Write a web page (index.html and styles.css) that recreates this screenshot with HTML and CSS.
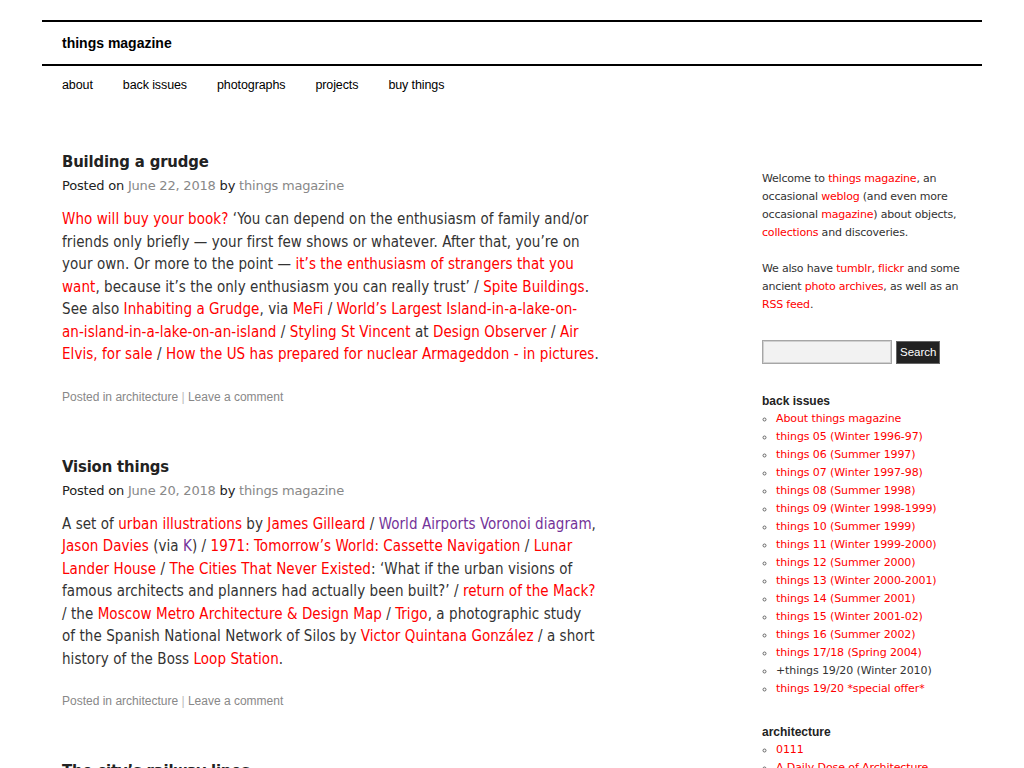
FILE: index.html
```html
<!DOCTYPE html>
<html lang="en">
<head>
<meta charset="utf-8">
<title>things magazine</title>
<link rel="stylesheet" href="styles.css">
</head>
<body>
<div class="wrapper">
  <header class="site-header">
    <h1 class="site-title"><a href="#">things magazine</a></h1>
  </header>
  <nav class="main-nav">
    <a href="#">about</a>
    <a href="#">back issues</a>
    <a href="#">photographs</a>
    <a href="#">projects</a>
    <a href="#">buy things</a>
  </nav>
  <div class="main">
    <div class="content">
      <article class="post">
        <h2 class="post-title">Building a grudge</h2>
        <div class="meta">Posted on <a href="#">June 22, 2018</a> by <a href="#">things magazine</a></div>
        <p class="entry"><a href="#">Who will buy your book?</a> ‘You can depend on the enthusiasm of family and/or friends only briefly — your first few shows or whatever. After that, you’re on your own. Or more to the point — <a href="#">it’s the enthusiasm of strangers that you want</a>, because it’s the only enthusiasm you can really trust’ / <a href="#">Spite Buildings</a>. See also <a href="#">Inhabiting a Grudge</a>, via <a href="#">MeFi</a> / <a href="#">World’s Largest Island-in-a-lake-on-an‑island‑in‑a‑lake‑on‑an‑island</a> / <a href="#">Styling St Vincent</a> at <a href="#">Design Observer</a> / <a href="#">Air Elvis, for sale</a> / <a href="#">How the US has prepared for nuclear Armageddon - in pictures</a>.</p>
        <div class="post-footer">Posted in <a href="#">architecture</a> <span class="sep">|</span> <a href="#">Leave a comment</a></div>
      </article>
      <article class="post">
        <h2 class="post-title">Vision things</h2>
        <div class="meta">Posted on <a href="#">June 20, 2018</a> by <a href="#">things magazine</a></div>
        <p class="entry">A set of <a href="#">urban illustrations</a> by <a href="#">James Gilleard</a> / <a class="visited" href="#">World Airports Voronoi diagram</a>, <a href="#">Jason Davies</a> (via <a class="visited" href="#">K</a>) / <a href="#">1971: Tomorrow’s World: Cassette Navigation</a> / <a href="#">Lunar Lander House</a> / <a href="#">The Cities That Never Existed</a>: ‘What if the urban visions of famous architects and planners had actually been built?’ / <a href="#">return of the Mack?</a> / the <a href="#">Moscow Metro Architecture &amp; Design Map</a> / <a href="#">Trigo</a>, a photographic study of&nbsp;the Spanish National Network of Silos by <a href="#">Victor Quintana González</a> / a short history of the Boss <a href="#">Loop Station</a>.</p>
        <div class="post-footer">Posted in <a href="#">architecture</a> <span class="sep">|</span> <a href="#">Leave a comment</a></div>
      </article>
      <article class="post">
        <h2 class="post-title">The city’s railway lines</h2>
      </article>
    </div>
    <aside class="sidebar">
      <p>Welcome to <a href="#">things magazine</a>, an occasional <a href="#">weblog</a> (and even more occasional <a href="#">magazine</a>) about objects, <a href="#">collections</a> and discoveries.</p>
      <p>We also have <a href="#">tumblr</a>, <a href="#">flickr</a> and some ancient <a href="#">photo archives</a>, as well as an <a href="#">RSS feed</a>.</p>
      <form class="search">
        <input type="text" class="search-input">
        <button type="button" class="search-btn">Search</button>
      </form>
      <h3 class="widget-title">back issues</h3>
      <ul class="widget-list">
        <li><a href="#">About things magazine</a></li>
        <li><a href="#">things 05 (Winter 1996-97)</a></li>
        <li><a href="#">things 06 (Summer 1997)</a></li>
        <li><a href="#">things 07 (Winter 1997-98)</a></li>
        <li><a href="#">things 08 (Summer 1998)</a></li>
        <li><a href="#">things 09 (Winter 1998-1999)</a></li>
        <li><a href="#">things 10 (Summer 1999)</a></li>
        <li><a href="#">things 11 (Winter 1999-2000)</a></li>
        <li><a href="#">things 12 (Summer 2000)</a></li>
        <li><a href="#">things 13 (Winter 2000-2001)</a></li>
        <li><a href="#">things 14 (Summer 2001)</a></li>
        <li><a href="#">things 15 (Winter 2001-02)</a></li>
        <li><a href="#">things 16 (Summer 2002)</a></li>
        <li><a href="#">things 17/18 (Spring 2004)</a></li>
        <li><a class="dark" href="#">+things 19/20 (Winter 2010)</a></li>
        <li><a href="#">things 19/20 *special offer*</a></li>
      </ul>
      <h3 class="widget-title">architecture</h3>
      <ul class="widget-list">
        <li><a href="#">0111</a></li>
        <li><a href="#">A Daily Dose of Architecture</a></li>
      </ul>
    </aside>
  </div>
</div>
</body>
</html>
```

FILE: styles.css
```css
* { box-sizing: border-box; }
html, body { margin: 0; padding: 0; background: #fff; }
body {
  font-family: "DejaVu Sans", "Liberation Sans", sans-serif;
  color: #333;
  height: 768px;
  overflow: hidden;
}
a { text-decoration: none; color: #ff0000; }
.wrapper {
  width: 940px;
  margin: 20px auto 0;
}
.site-header {
  border-top: 2px solid #000;
  border-bottom: 2px solid #000;
  height: 46px;
  padding: 0 20px 1px;
  display: flex;
  align-items: center;
}
.site-title {
  margin: 0;
  font-family: "Liberation Sans", Arial, sans-serif;
  font-size: 14px;
  font-weight: bold;
}
.site-title a { color: #000; }
.main-nav {
  display: flex;
  gap: 30px;
  padding: 0 20px;
  height: 38px;
  align-items: center;
  font-family: "Liberation Sans", Arial, sans-serif;
  font-size: 12.5px;
  letter-spacing: -0.1px;
}
.main-nav a { color: #000; }
.main {
  display: flex;
  padding: 0 20px;
  margin-top: 45px;
}
.content {
  width: 541px;
  flex: none;
}
.post { margin-bottom: 48px; }
.post-title {
  margin: 0;
  font-family: "DejaVu Sans Condensed", "DejaVu Sans", sans-serif;
  font-size: 16.5px;
  font-weight: bold;
  color: #222;
  line-height: 26px;
  letter-spacing: -0.15px;
}
.meta {
  font-size: 13px;
  line-height: 20px;
  margin-top: 1px;
  color: #222;
  letter-spacing: -0.2px;
}
.meta a { color: #888; }
.entry {
  font-family: "DejaVu Sans Condensed", "DejaVu Sans", sans-serif;
  font-size: 15px;
  line-height: 22.5px;
  margin: 12px 0 0;
  letter-spacing: 0.06px;
}
.entry a.visited { color: #743399; }
.post-footer {
  margin-top: 22px;
  font-family: "Liberation Sans", Arial, sans-serif;
  font-size: 12px;
  color: #888;
  line-height: 18px;
}
.post-footer a { color: #888; }
.post-footer .sep { color: #bbb; }
.sidebar {
  margin-left: 159px;
  width: 200px;
  flex: none;
  padding-top: 21px;
  font-size: 11px;
  line-height: 18px;
  color: #333;
}
.sidebar p { margin: 0 0 18px; letter-spacing: -0.2px; }
.search {
  display: flex;
  gap: 4px;
  margin: 26px 0 28px;
  align-items: center;
}
.search-input {
  width: 130px;
  height: 24px;
  border: 1px solid #a6a6a6;
  outline: 1px solid #d0d0d0;
  outline-offset: -2px;
  background: #f2f2f2;
  margin: 0;
}
.search-btn {
  height: 23px;
  padding: 0 3px;
  background: #222;
  color: #fff;
  border: 1px solid #666;
  font-family: "Liberation Sans", Arial, sans-serif;
  font-size: 11.5px;
  margin: 0;
}
.widget-title {
  margin: 0;
  font-family: "Liberation Sans", Arial, sans-serif;
  font-size: 12px;
  font-weight: bold;
  color: #222;
  line-height: 18px;
}
.widget-list {
  margin: 0 0 25px;
  padding-left: 14px;
  list-style: circle;
  letter-spacing: -0.1px;
}
.widget-list li::marker { color: #666; }
.widget-list a.dark { color: #333; }
```
